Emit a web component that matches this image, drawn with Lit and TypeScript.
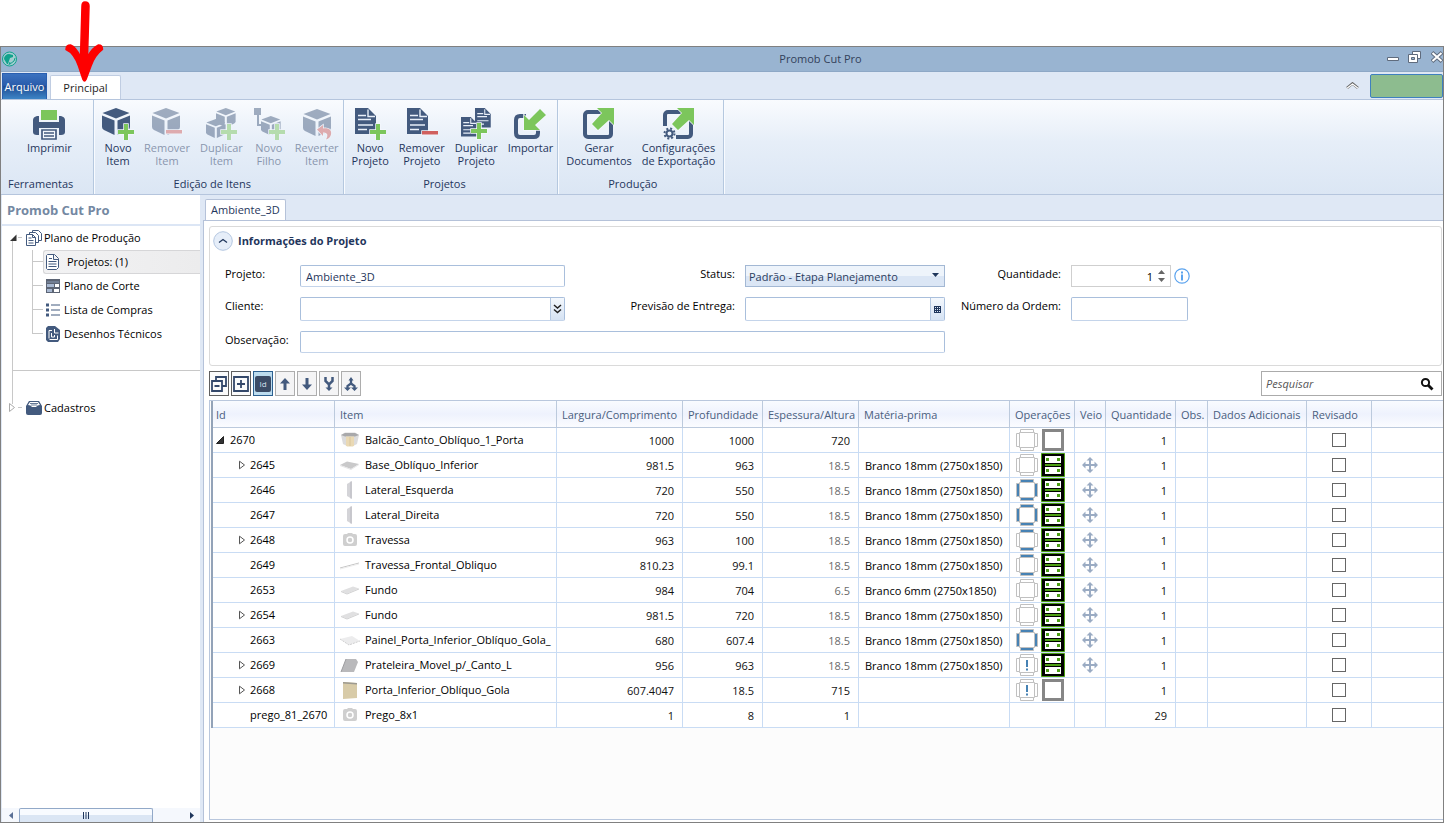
import { LitElement, html, svg, css, nothing } from "lit";
import { customElement } from "lit/decorators.js";
import { classMap } from "lit/directives/class-map.js";

const DARK = "#435a7e";
const GREEN = "#7cc65c";
const RED = "#d0605e";

const cube = (x: number, y: number, s: number) => svg`
  <g transform="translate(${x} ${y}) scale(${s})" fill=${DARK}>
    <path d="M14 0 27.500 5 14 10.500 .500 5z"/>
    <path d="M0 7.500 12.500 12.500V27L2 22Q0 21 0 19z"/>
    <path d="M15.500 12.500 28 7.500V19Q28 21 26 22L15.500 27z"/>
  </g>`;
const plus = (x: number, y: number) => svg`
  <path d="M${x - 2} ${y - 8}h4v6h6v4h-6v6h-4v-6h-6v-4h6z" fill=${GREEN} stroke="#f4f8fd" stroke-width="1.500" paint-order="stroke"/>`;
const minus = (x: number, y: number) => svg`
  <path d="M${x} ${y}h16v3.500h-16z" fill=${RED} stroke="#f4f8fd" stroke-width="1.500" paint-order="stroke"/>`;
const sheet = (x: number, y: number, s: number) => svg`
  <g transform="translate(${x} ${y}) scale(${s})">
    <path d="M0 0h13l8 8v18H0z" fill=${DARK}/>
    <path d="M13 1.500V8.500h7M3 7.500h8M3 11.500h13M3 17h15M3 21.500h9" fill="none" stroke="#e9f0f9" stroke-width="1.400"/>
  </g>`;
const outArrow = svg`<path d="M14 0h17v17l-5-5-11 10-6-6L19 5z" fill=${GREEN} stroke="#f4f8fd" stroke-width="1.500" paint-order="stroke"/>`;

const ribbonIcons: Record<string, unknown> = {
  print: svg`
    <rect x="8" y="2" width="16" height="10" fill=${GREEN}/>
    <path d="M4 8h2v6h20V8h2q4 1 4 4v12q0 3-4 3h-2v-7H6v7H4q-4 0-4-3V12q0-3 4-4z" fill=${DARK}/>
    <path d="M9 22h14v9H9zM11 25h10M11 28h10" fill="#f4f8fd" stroke=${DARK} stroke-width="1.700"/>`,
  cubePlus: svg`${cube(0, 0, 1)}${plus(24, 24)}`,
  cubeMinus: svg`${cube(1, 0, 1)}${minus(15, 22)}`,
  cubesPlus: svg`${cube(11, 0, 0.7)}${cube(1, 11, 0.7)}${plus(24, 24)}`,
  childPlus: svg`<path d="M1 0h7v7H6v9h4v2H4V7H1z" fill=${DARK}/>${cube(8, 8, 0.7)}${plus(24, 24)}`,
  cubeUndo: svg`${cube(2, 1, 1)}<path d="M16 21.500 22 17v3.500c6-1 9 2 8 6q-1 4-5 5 2-4 1-5.500-1-2-4-1.500V28z" fill=${RED} stroke="#f4f8fd" stroke-width="1.500" paint-order="stroke"/>`,
  docPlus: svg`${sheet(1, 0, 1)}${plus(24, 24)}`,
  docMinus: svg`${sheet(1, 0, 1)}${minus(16, 23)}`,
  docsPlus: svg`${sheet(15, 0, 0.75)}${sheet(1, 9, 0.75)}${plus(19, 23)}`,
  import: svg`
    <path d="M12 8H6q-4 0-4 4v13q0 4 4 4h14q4 0 4-4v-3" fill="none" stroke=${DARK} stroke-width="4"/>
    <path d="M26 1l6 6-11 10 5 5H10V7l5 5z" fill=${GREEN} stroke="#f4f8fd" stroke-width="1.500" paint-order="stroke"/>`,
  export: svg`<rect x="2" y="4" width="26" height="25" rx="3" fill="none" stroke=${DARK} stroke-width="4"/>${outArrow}`,
  exportGear: svg`
    <rect x="2" y="4" width="26" height="25" rx="3" fill="none" stroke=${DARK} stroke-width="4"/>
    <rect x="0" y="18" width="13" height="14" fill="#edf3fb"/>${outArrow}
    <circle cx="6.500" cy="25.500" r="3" fill="none" stroke=${DARK} stroke-width="2"/>
    <circle cx="6.500" cy="25.500" r="5" fill="none" stroke=${DARK} stroke-width="2" stroke-dasharray="2 1.930"/>`,
};

type Cmd = { icon: string; l1: string; l2?: string; off?: boolean };
const groups: { name: string; cls?: string; cmds: Cmd[] }[] = [
  { name: "Ferramentas", cls: "tools", cmds: [{ icon: "print", l1: "Imprimir" }] },
  {
    name: "Edição de Itens",
    cmds: [
      { icon: "cubePlus", l1: "Novo", l2: "Item" },
      { icon: "cubeMinus", l1: "Remover", l2: "Item", off: true },
      { icon: "cubesPlus", l1: "Duplicar", l2: "Item", off: true },
      { icon: "childPlus", l1: "Novo", l2: "Filho", off: true },
      { icon: "cubeUndo", l1: "Reverter", l2: "Item", off: true },
    ],
  },
  {
    name: "Projetos",
    cmds: [
      { icon: "docPlus", l1: "Novo", l2: "Projeto" },
      { icon: "docMinus", l1: "Remover", l2: "Projeto" },
      { icon: "docsPlus", l1: "Duplicar", l2: "Projeto" },
      { icon: "import", l1: "Importar" },
    ],
  },
  {
    name: "Produção",
    cls: "roomy",
    cmds: [
      { icon: "export", l1: "Gerar", l2: "Documentos" },
      { icon: "exportGear", l1: "Configurações", l2: "de Exportação" },
    ],
  },
];

const treeIcons: Record<string, unknown> = {
  stack: svg`<g fill="#fff" stroke=${DARK}><path d="M6.500 3V.500h6l3 3v7H12"/><path d="M3.500 5V2.500h6l3 3v7H9"/><path d="M.500 4.500h6l3 3v8H.500zM6.500 4.500v3h3M2.500 8h3M2.500 10.500h5M2.500 13h5" /></g>`,
  doc: svg`<path d="M2.500.500h7l4 4v9l-2 2h-9l-1-1v-13zM8.500.500v5h5M4 4.500h3M3.500 7.500h8M3.500 10h8M3.500 12.500h8" fill="#fff" stroke=${DARK}/>`,
  cut: svg`<path d="M1 1h14v14H1z" fill="#5c6474"/><path d="M2 4h12" stroke="#8799b4" stroke-width="1"/><path d="M2 6h7v3H2zM2 11h5v3H2z" fill="#a9b9d2"/><path d="M10 6h4v3h-4zM9 11h5v3H9z" fill="#fff"/>`,
  list: svg`<path d="M1 1.500h3v3H1zM1 6.500h3v3H1zM1 11.500h3v3H1z" fill=${DARK}/><path d="M6 3h9M6 8h9M6 13h9" stroke=${DARK} stroke-width="1"/>`,
  tech: svg`<path d="M3 0h7l5 4v9l-2 3H3l-2-2V2z" fill=${DARK}/><path d="M4 12.500V4.500h3M9.500 3v4h4M6.500 7v4h3V9M4.500 13.500h8v-4" fill="none" stroke="#fff"/>`,
  box: svg`<path d="M0 6 3 1h10l3 5v7q0 2-2 2H2q-2 0-2-2z" fill=${DARK}/><path d="M2 5l2-3h8l2 3q-3 0-4 2H6Q5 5 2 5z" fill="#fff"/><path d="M4 3.500h8M5 5h6" stroke=${DARK} stroke-width=".8"/>`,
};

const children = [
  { icon: "doc", label: "Projetos: (1)", sel: true },
  { icon: "cut", label: "Plano de Corte" },
  { icon: "list", label: "Lista de Compras" },
  { icon: "tech", label: "Desenhos Técnicos" },
];

const thumbs: Record<string, unknown> = {
  cabinet: svg`<path d="M1 4 5 1.500h10L19 4l-2 9-4 2H7l-4-2z" fill="#dcdcdd"/><path d="M1 4 5 2h10l4 2-4 1.500H5z" fill="#a9a9ab"/><path d="M6 5.500h8v9l-1 1H7l-1-1z" fill="#ead9b4"/><path d="M10 6v9" stroke="#cdb98d" stroke-width=".6"/>`,
  base: svg`<path d="M0 9 7 5.500 19 8 11 13z" fill="#c9c9ca"/><path d="M0 9l11 4 8-5v1l-8 5-11-4z" fill="#e5e5e6"/>`,
  side: svg`<path d="M7 3l5-3v18l-5-3z" fill="#d4d4d8"/><path d="M11 .500V17.500" stroke="#bbbbc2"/>`,
  camera: svg`<path d="M5 3h2l1-1h4l1 1h2q2 0 2 2v8q0 2-2 2H5q-2 0-2-2V5q0-2 2-2z" fill="#cfcfcf"/><circle cx="10" cy="9" r="3" fill="none" stroke="#fff" stroke-width="1.500"/>`,
  rail: svg`<path d="M0 12 19 7" stroke="#c4c4c4"/><path d="M0 13 19 8" stroke="#ececec"/>`,
  panel: svg`<path d="M1 10 13 5.500 19 7.500 7 12.500z" fill="#e0e0e1"/><path d="M1 10l6 2.500 12-5v1L7 13.500 1 11z" fill="#cfcfd0"/>`,
  door: svg`<path d="M0 8 12 5l8 5-11 4z" fill="#ececed"/><path d="M0 8l9 6 11-4" fill="none" stroke="#cfcfd0" stroke-dasharray="2 1"/>`,
  shelf: svg`<path d="M6 3h10l2 3-4 10H1z" fill="#b9b9bb"/><path d="M1 16 6 3" stroke="#9d9da0"/>`,
  wood: svg`<path d="M3 1l14 1v15l-14 1z" fill="#d8cba8"/><path d="M3 1l14 1v1.500L3 2.500z" fill="#9d9a90"/>`,
};

type Row = {
  id: string; exp?: "open" | "shut"; child: boolean; img: string; item: string;
  w: string; d: string; h: string; strong?: boolean; mat?: string; op?: string; n: string;
};
const M18 = "Branco 18mm (2750x1850)";
const rows: Row[] = [
  { id: "2670", exp: "open", child: false, img: "cabinet", item: "Balcão_Canto_Oblíquo_1_Porta", w: "1000", d: "1000", h: "720", strong: true, op: "none", n: "1" },
  { id: "2645", exp: "shut", child: true, img: "base", item: "Base_Oblíquo_Inferior", w: "981.5", d: "963", h: "18.5", mat: M18, op: "none", n: "1" },
  { id: "2646", child: true, img: "side", item: "Lateral_Esquerda", w: "720", d: "550", h: "18.5", mat: M18, op: "all", n: "1" },
  { id: "2647", child: true, img: "side", item: "Lateral_Direita", w: "720", d: "550", h: "18.5", mat: M18, op: "all", n: "1" },
  { id: "2648", exp: "shut", child: true, img: "camera", item: "Travessa", w: "963", d: "100", h: "18.5", mat: M18, op: "tb", n: "1" },
  { id: "2649", child: true, img: "rail", item: "Travessa_Frontal_Obliquo", w: "810.23", d: "99.1", h: "18.5", mat: M18, op: "tb", n: "1" },
  { id: "2653", child: true, img: "panel", item: "Fundo", w: "984", d: "704", h: "6.5", mat: "Branco 6mm (2750x1850)", op: "none", n: "1" },
  { id: "2654", exp: "shut", child: true, img: "panel", item: "Fundo", w: "981.5", d: "720", h: "18.5", mat: M18, op: "none", n: "1" },
  { id: "2663", child: true, img: "door", item: "Painel_Porta_Inferior_Oblíquo_Gola_", w: "680", d: "607.4", h: "18.5", mat: M18, op: "all", n: "1" },
  { id: "2669", exp: "shut", child: true, img: "shelf", item: "Prateleira_Movel_p/_Canto_L", w: "956", d: "963", h: "18.5", mat: M18, op: "warn", n: "1" },
  { id: "2668", exp: "shut", child: true, img: "wood", item: "Porta_Inferior_Oblíquo_Gola", w: "607.4047", d: "18.5", h: "715", strong: true, op: "warn", n: "1" },
  { id: "prego_81_2670", child: true, img: "camera", item: "Prego_8x1", w: "1", d: "8", h: "1", strong: true, n: "29" },
];
const heads = ["Id", "Item", "Largura/Comprimento", "Profundidade", "Espessura/Altura", "Matéria-prima", "Operações", "Veio", "Quantidade", "Obs.", "Dados Adicionais", "Revisado", ""];

const edges = (op: string) => {
  const tb = op === "all" || op === "tb" ? "#4682b4" : "#fff";
  const lr = op === "all" ? "#4682b4" : "#fff";
  return html`<svg width="22" height="22" viewBox="0 0 22 22">
    <g stroke="#c0c0c0">
      <path d="M3.500 3.500h15v15h-15z" fill="#fff"/>
      <path d="M4.500.500h13v3h-13zM4.500 18.500h13v3h-13z" fill=${tb}/>
      <path d="M.500 4.500h3v13h-3zM18.500 4.500h3v13h-3z" fill=${lr}/>
    </g>
    ${op === "warn" ? svg`<path d="M10 6h2v7h-2zM10 14.500h2v2h-2z" fill="#4682b4"/>` : nothing}
  </svg>`;
};
const machining = html`<svg width="24" height="24" viewBox="0 0 24 24">
  <path d="M.500.500h23v23H.500z" fill="#000" stroke="#4c9f14"/>
  <path d="M4 3h16v7H4zM4 14h16v7H4z" fill="#fff"/>
  <path d="M5 5h3v3H5zM16 5h3v3h-3zM4 11h16v2H4zM5 16h3v3H5zM16 16h3v3h-3z" fill="#4c9f14"/>
</svg>`;
const blank = html`<svg width="24" height="24" viewBox="0 0 24 24"><path d="M2.500 2.500h19v19h-19z" fill="#fff" stroke="#868686" stroke-width="3"/></svg>`;
const grain = html`<svg width="16" height="16" viewBox="0 0 16 16"><path d="M8 0l3.500 3.500H9V7h3.500V4.500L16 8l-3.500 3.500V9H9v3.500h2.500L8 16l-3.500-3.500H7V9H3.500v2.500L0 8l3.500-3.500V7H7V3.500H4.500z" fill="#9aabc3"/></svg>`;
const openMark = html`<svg width="8" height="8" viewBox="0 0 8 8"><path d="M7.500.500v7h-7z" fill="#333" stroke="#222"/></svg>`;
const shutMark = html`<svg width="8" height="10" viewBox="0 0 8 10"><path d="M1.500 1.200v7.600L6.500 5z" fill="#fff" stroke="#555"/></svg>`;

@customElement("app-root")
export class AppRoot extends LitElement {
  static styles = css`
    :host { display: flex; flex-direction: column; height: 100vh; box-sizing: border-box; padding: 46px 1px 6px 0; background: #fff; position: relative;
      font-family: "Open Sans", "Noto Sans", sans-serif; font-size: 11px; line-height: 16px; color: #1a1a1a; }
    * { box-sizing: border-box; }
    svg { display: block; flex: none; }
    button, input, select { font: inherit; color: inherit; margin: 0; padding: 0; border-radius: 0; outline: none; }
    button { background: none; border: 0; }
    .pointer { position: absolute; left: 64px; top: 0; pointer-events: none; z-index: 2; }
    .window { flex: 1; min-height: 0; border: 1px solid #808080; display: flex; flex-direction: column; background: #dfe8f5; }
    .title { display: flex; align-items: center; height: 25px; background: #99b4d1; border-bottom: 1px solid #8ea8c6; padding-left: 1px; flex: none; }
    .title h1 { flex: 1; margin: 0; padding-left: 236px; font: inherit; color: #33415a; text-align: center; }
    .winbtns { display: flex; gap: 9px; align-items: center; height: 20px; align-self: flex-start; }
    .tabs { display: flex; align-items: flex-end; height: 27px; flex: none; padding-left: 1px; }
    .file { width: 45px; height: 26px; color: #fff; border: 1px solid #2a5fb0; border-bottom: 0; background: linear-gradient(#3b72c0, #2a5cab 45%, #1f4c94 50%, #3d85c6); white-space: nowrap; display: flex; align-items: center; justify-content: center; }
    .main { width: 71px; height: 24px; margin-left: 3px; background: #fff; border: 1px solid #c0cde2; border-bottom: 0; border-radius: 2px 2px 0 0; color: #1e1e1e; }
    .right { margin-left: auto; display: flex; align-items: center; gap: 11px; height: 27px; }
    .badge { width: 73px; height: 24px; background: #8dbc8f; border: 1px solid #3f80bf; border-radius: 2px; }
    .ribbon { display: flex; flex: none; height: 96px; border-top: 1px solid #b5c5dd; border-bottom: 1px solid #b5c5dd; background: linear-gradient(#f9fbfe, #e6eef8 45%, #dbe6f4); padding-left: 1px; }
    .group { display: flex; flex-direction: column; justify-content: space-between; border-right: 1px solid #b5c8df; box-shadow: 1px 0 #f8fbff; padding: 6px 0 2px 4px; color: #1f365c; }
    .group.tools { width: 92px; }
    .group.roomy { padding-right: 4px; }
    .cmds { display: flex; gap: 2px; }
    .cmd { display: flex; flex-direction: column; align-items: center; gap: 1px; padding: 2px 4px 0; line-height: 13px; white-space: nowrap; color: #1f365c; }
    .tools .cmd { margin-left: 17px; }
    .cmd:disabled { opacity: .48; }
    .gname { text-align: center; padding-right: 16px; }
    .tools .gname { text-align: left; padding-left: 2px; }
    .body { flex: 1; min-height: 0; display: flex; }
    .side { flex: none; margin-left: 1px; width: 198px; background: #fff; display: flex; flex-direction: column; }
    .side h2 { margin: 0; height: 31px; padding: 5px 5px 0; font-size: 13px; line-height: 20px; color: #7488a2; border-bottom: 2px solid #dce6f5; flex: none; }
    .tree { list-style: none; margin: 0; padding: 0; flex: 1; }
    .tree ul { list-style: none; margin: 0; padding: 0; }
    .node { display: flex; height: 24px; align-items: center; color: #000; }
    .node a { color: inherit; text-decoration: none; display: flex; align-items: center; gap: 2px; flex: 1; height: 24px; padding-left: 2px; }
    .node .leaf { border: 1px solid transparent; padding-left: 1px; gap: 3px; }
    .node .sel { background: linear-gradient(90deg, #f2f2f3, #ececed); border-color: #d6d6d8; border-right: 0; border-radius: 3px 0 0 3px; gap: 6px; }
    .rule { height: 25px; margin-left: 10px; border-left: 1px solid #c8c8c8; border-bottom: 1px solid #c8c8c8; }
    .rule.open { border-bottom: 0; }
    .hscroll { display: flex; height: 14px; align-items: stretch; background: #f5f8fd; flex: none; }
    .hscroll button { width: 17px; display: grid; place-items: center; }
    .track { flex: 1; display: flex; }
    .thumb { width: 82%; border: 1px solid #92a9c8; border-bottom: 0; border-radius: 2px 2px 0 0; background: linear-gradient(#f8fbff 50%, #dbe6f4 50%); display: grid; place-items: center; }
    .content { flex: 1; min-width: 0; display: flex; flex-direction: column; padding-left: 3px; }
    .docs { height: 25px; display: flex; align-items: flex-end; flex: none; }
    .doc { margin-left: 2px; height: 21px; padding: 0 5px; background: #fff; border: 1px solid #b5c2d9; border-bottom: 0; border-radius: 2px 2px 0 0; color: #1f365c; }
    .page { flex: 1; min-height: 0; background: #fff; border-left: 1px solid #b5c2d9; border-top: 1px solid #b5c2d9; padding: 5px 0 2px 5px; display: flex; flex-direction: column; }
    .info { margin: 0 1px 0 0; border: 1px solid #dadada; border-radius: 3px; padding: 3px 0 12px 3px; flex: none; }
    .info h3 { margin: 0; display: flex; align-items: center; gap: 5px; height: 22px; font-size: 11px; color: #1f365c; }
    .form { display: grid; grid-template-columns: 75px 265px 180px 200px 126px 120px; row-gap: 10px; padding: 13px 0 0 12px; align-items: start; }
    .form label { line-height: 18px; color: #000; }
    .form .r { text-align: right; padding-right: 10px; }
    .box { display: flex; height: 24px; border: 1px solid #a9bfdc; border-bottom-color: #c4d4ea; border-radius: 2px; background: #fff; color: #1f365c; }
    .box input { flex: 1; min-width: 0; border: 0; padding: 2px 5px 0; background: none; }
    .box.low { height: 22px; }
    .box button { border-left: 1px solid #b4c7e0; background: linear-gradient(#f4f8fd, #d5e2f3); display: grid; place-items: center; width: 14px; }
    .wide { grid-column: 2 / 5; }
    .pick { display: grid; height: 22px; color: #2c405f; }
    .pick > * { grid-area: 1 / 1; }
    .pick select { appearance: none; border: 1px solid #a3b8d4; background: linear-gradient(#eef4fb 50%, #dbe6f5 50%); padding: 1px 3px 0; }
    .pick svg { justify-self: end; align-self: center; margin: 0 6px 2px 0; pointer-events: none; }
    .qty { display: flex; align-items: center; gap: 3px; }
    .spin { width: 100px; border-color: #cfcfcf; border-radius: 0; }
    .spin input { text-align: right; padding-right: 4px; appearance: textfield; color: #000; }
    .spin input::-webkit-inner-spin-button { appearance: none; margin: 0; }
    .steps { width: 13px; display: flex; flex-direction: column; justify-content: center; gap: 4px; }
    .box .steps button { border: 0; background: none; width: 8px; height: 4px; }
    .order { width: 117px; }
    .bar { display: flex; gap: 2px; margin: 5px 1px 4px 0; flex: none; }
    .tool { width: 20px; height: 25px; border: 1px solid #adadad; background: #f4f4f5; display: grid; place-items: center; }
    .tool.on { border-color: #5f5f5f; background: #fbfbfb; }
    .tool.active { border-color: #2c6090; background: #bcdcef; }
    .chip { width: 16px; height: 16px; border-radius: 2px; background: #3a4b66; color: #d5e0ee; font-size: 8px; line-height: 16px; text-align: center; }
    .search { margin-left: auto; width: 181px; height: 25px; border: 1px solid #ababab; display: flex; align-items: center; padding-right: 7px; background: #fff; }
    .search input { flex: 1; min-width: 0; border: 0; padding: 0 4px; font-style: italic; background: none; }
    .search input::placeholder { color: #555; opacity: 1; }
    .grid { flex: 1; min-height: 0; border: 1px solid #b9c7dd; border-right: 0; background: #fcfcfc; padding-left: 1px; overflow: hidden; }
    table { width: 100%; table-layout: fixed; border-collapse: separate; border-spacing: 0; border-left: 2px solid #93a3b8; background: #fff; }
    th, td { padding: 0 0 0 5px; white-space: nowrap; overflow: hidden; text-align: left; font-weight: 400; border-right: 1px solid #c9dcf4; border-bottom: 1px solid #c9dcf4; }
    th:first-child, td:first-child { padding-left: 3px; }
    th:last-child, td:last-child { border-right: 0; }
    th { height: 27px; padding-top: 2px; color: #4a5e7e; border-color: #bccadd; background: linear-gradient(#f9fbff, #eef2fd 50%, #fbfcff); }
    td { height: 25px; color: #000; }
    td.num { text-align: right; padding: 2px 8px 0 0; color: #111; }
    td.mat { padding: 2px 0 0 6px; }
    td.dim { color: #6a6a6a; }
    .cell { display: flex; align-items: center; gap: 5px; height: 24px; }
    .mark { width: 8px; }
    .lead { gap: 6px; }
    .kid { padding-left: 22px; gap: 4px; }
    .ops { display: flex; align-items: center; gap: 3px; height: 24px; padding-left: 1px; }
    td.mid { text-align: center; padding-left: 0; }
    .mid svg { margin: 0 auto; }
    .check { appearance: none; width: 14px; height: 14px; border: 1px solid #666; background: #fff; display: block; margin: 0 auto; }
    .w0 { width: 122px; } .w1 { width: 222px; } .w2 { width: 126px; } .w3 { width: 80px; } .w4 { width: 96px; } .w5 { width: 151px; }
    .w6 { width: 65px; } .w7 { width: 31px; } .w8 { width: 70px; } .w9 { width: 32px; } .w10 { width: 99px; } .w11 { width: 65px; }
  `;

  private tool(label: string, cls: string, glyph: unknown) {
    return html`<button class="tool ${cls}" aria-label=${label}>${glyph}</button>`;
  }

  private toolbar() {
    const i = (body: unknown) => html`<svg width="16" height="16" viewBox="0 0 16 16">${body}</svg>`;
    return html`<div class="bar">
      ${this.tool("Recolher", "on", i(svg`<path d="M5 5V1h10v9h-4M1 5h10v10H1zM3.500 10h5" fill="none" stroke="#34486a" stroke-width="1.800"/>`))}
      ${this.tool("Expandir", "on", i(svg`<path d="M1 1h14v14H1zM4 8h8M8 4v8" fill="none" stroke="#34486a" stroke-width="1.800"/>`))}
      ${this.tool("Identificador", "active", html`<span class="chip">Id</span>`)}
      ${this.tool("Subir", "", i(svg`<path d="M8 2l5 5.500H9.500V14h-3V7.500H3z" fill=${DARK}/>`))}
      ${this.tool("Descer", "", i(svg`<path d="M8 14l5-5.500H9.500V2h-3v6.500H3z" fill=${DARK}/>`))}
      ${this.tool("Unir", "", i(svg`<path d="M4.500 1v4L8 8.500 11.500 5V1M8 8v5" fill="none" stroke=${DARK} stroke-width="2.500"/><path d="M4.500 11.500h7L8 15z" fill=${DARK}/>`))}
      ${this.tool("Separar", "", i(svg`<path d="M8 3v4.500L4.500 10v3M8 7.500l3.500 2.500v3" fill="none" stroke=${DARK} stroke-width="2.300"/><path d="M1 11.500h7L4.500 15zM8 11.500h7L11.500 15zM8 1l2.500 3.500h-5z" fill=${DARK}/>`))}
      <div class="search">
        <input type="text" placeholder="Pesquisar" aria-label="Pesquisar" />
        <svg width="14" height="14" viewBox="0 0 14 14"><circle cx="5.500" cy="5.500" r="3.600" fill="none" stroke="#111" stroke-width="2"/><path d="M8 8l4.500 4.500" stroke="#111" stroke-width="2.800"/></svg>
      </div>
    </div>`;
  }

  private form() {
    return html`<section class="info">
      <h3>
        <button aria-label="Recolher seção"><svg width="20" height="20" viewBox="0 0 20 20"><circle cx="10" cy="10" r="9.300" fill="#e6eef9" stroke="#b3c6e0"/><path d="M6 11.500l4-3 4 3" fill="none" stroke="#1f365c" stroke-width="1.300"/></svg></button>
        Informações do Projeto
      </h3>
      <div class="form">
        <label for="proj">Projeto:</label>
        <div class="box low"><input id="proj" type="text" .value=${"Ambiente_3D"} /></div>
        <label class="r" for="status">Status:</label>
        <div class="pick"><select id="status"><option>Padrão - Etapa Planejamento</option></select><svg width="7" height="4" viewBox="0 0 7 4"><path d="M0 0h7L3.500 4z" fill="#1f365c"/></svg></div>
        <label class="r" for="qty">Quantidade:</label>
        <div class="qty">
          <div class="box low spin"><input id="qty" type="number" .value=${"1"} /><span class="steps">
            <button aria-label="Aumentar"><svg width="7" height="4" viewBox="0 0 7 4"><path d="M0 4h7L3.500 0z" fill="#666"/></svg></button>
            <button aria-label="Diminuir"><svg width="7" height="4" viewBox="0 0 7 4"><path d="M0 0h7L3.500 4z" fill="#666"/></svg></button></span></div>
          <svg width="16" height="16" viewBox="0 0 16 16"><circle cx="8" cy="8" r="7.200" fill="#fff" stroke="#5ba3ee" stroke-width="1.200"/><path d="M7 3.500h2v2H7zM7 6.500h2v6H7z" fill="#5ba3ee"/></svg>
        </div>
        <label for="client">Cliente:</label>
        <div class="box"><input id="client" type="text" /><button aria-label="Escolher cliente"><svg width="9" height="10" viewBox="0 0 9 10"><path d="M1 1l3.500 3L8 1M1 5.500l3.500 3 3.500-3" fill="none" stroke="#222" stroke-width="1.500"/></svg></button></div>
        <label class="r" for="due">Previsão de Entrega:</label>
        <div class="box"><input id="due" type="text" /><button aria-label="Abrir calendário"><svg width="7" height="7" viewBox="0 0 7 7"><path d="M0 0h7v7H0z" fill="#1f365c"/><path d="M1 1h1v1H1zM3 1h1v1H3zM5 1h1v1H5zM1 3h1v1H1zM3 3h1v1H3zM5 3h1v1H5zM1 5h1v1H1zM3 5h1v1H3zM5 5h1v1H5z" fill="#dbe6f5"/></svg></button></div>
        <label class="r" for="order">Número da Ordem:</label>
        <div class="box order"><input id="order" type="text" /></div>
        <label for="obs">Observação:</label>
        <div class="box low wide"><input id="obs" type="text" /></div>
      </div>
    </section>`;
  }

  private row(r: Row) {
    return html`<tr>
      <td><div class=${classMap({ cell: true, lead: !r.child, kid: r.child })}>
        <span class="mark">${r.exp === "open" ? openMark : r.exp === "shut" ? shutMark : nothing}</span>${r.id}</div></td>
      <td><div class="cell"><svg width="20" height="18" viewBox="0 0 20 18">${thumbs[r.img]}</svg>${r.item}</div></td>
      <td class="num">${r.w}</td>
      <td class="num">${r.d}</td>
      <td class=${classMap({ num: true, dim: !r.strong })}>${r.h}</td>
      <td class="mat">${r.mat ?? nothing}</td>
      <td><div class="ops">${r.op ? html`${edges(r.op)}${r.mat ? machining : blank}` : nothing}</div></td>
      <td class="mid">${r.mat ? grain : nothing}</td>
      <td class="num">${r.n}</td>
      <td></td><td></td>
      <td class="mid"><input class="check" type="checkbox" aria-label="Revisado ${r.id}" /></td>
      <td></td>
    </tr>`;
  }

  private sidebar() {
    const grey = "#c8c8c8";
    return html`<aside class="side">
      <h2>Promob Cut Pro</h2>
      <ul class="tree">
        <li>
          <div class="node">
            <svg width="22" height="24" viewBox="0 0 22 24"><path d="M10.500 14V24M16 11.500h4" stroke=${grey} fill="none"/><path d="M14.500 8.500v6.500H8z" fill="#333"/></svg>
            <a href="#plano"><svg width="16" height="16" viewBox="0 0 16 16">${treeIcons.stack}</svg>Plano de Produção</a>
          </div>
          <ul>
            ${children.map((c, i) => html`<li class="node">
              <svg width="41" height="24" viewBox="0 0 41 24"><path d="M10.500 0V24M30.500 0V${i === 3 ? 12 : 24}M31 11.500h10" stroke=${grey} fill="none"/></svg>
              <a class=${classMap({ leaf: true, sel: !!c.sel })} href="#item${i}"><svg width="16" height="16" viewBox="0 0 16 16">${treeIcons[c.icon]}</svg>${c.label}</a>
            </li>`)}
          </ul>
        </li>
        <li class="rule"></li>
        <li class="rule open"></li>
        <li class="node">
          <svg width="22" height="24" viewBox="0 0 22 24"><path d="M10.500 0V8M16 11.500h4" stroke=${grey} fill="none"/><path d="M7.500 7.500v8l5-4z" fill="#fff" stroke="#aaa"/></svg>
          <a href="#cadastros"><svg width="16" height="16" viewBox="0 0 16 16">${treeIcons.box}</svg>Cadastros</a>
        </li>
      </ul>
      <div class="hscroll">
        <button aria-label="Rolar para a esquerda"><svg width="4" height="7" viewBox="0 0 4 7"><path d="M4 0v7L0 3.500z" fill="#5a7096"/></svg></button>
        <div class="track"><div class="thumb"><svg width="6" height="7" viewBox="0 0 6 7"><path d="M.500 0v7M3 0v7M5.500 0v7" stroke="#1f365c"/></svg></div></div>
        <button aria-label="Rolar para a direita"><svg width="4" height="7" viewBox="0 0 4 7"><path d="M0 0v7l4-3.500z" fill="#1f365c"/></svg></button>
      </div>
    </aside>`;
  }

  render() {
    return html`
      <div class="window">
        <header class="title">
          <svg width="16" height="16" viewBox="0 0 16 16"><circle cx="7.500" cy="8" r="7" fill="#a3cdd0" stroke="#11a28c"/><path d="M7 3a5 5 0 0 0-5 5l3 5h1l1-3 1-3 3-1V4z" fill="#11a28c"/><path d="M8 13l4-3 1-3M7 14l1-3" stroke="#11a28c" fill="none"/></svg>
          <h1>Promob Cut Pro</h1>
          <div class="winbtns">
            <button aria-label="Minimizar"><svg width="12" height="12" viewBox="0 0 12 12"><path d="M.500 6.500h11v3H.500z" fill="#fff" stroke="#5f6b7d"/></svg></button>
            <button aria-label="Restaurar"><svg width="14" height="14" viewBox="0 0 14 14"><path d="M4.500 1.500h8v7h-8z" fill="#fff" stroke="#5f6b7d"/><path d="M.500 4.500h9v8h-9z" fill="#fff" stroke="#5f6b7d"/><path d="M3.500 7.500h3v2h-3z" fill="#99b4d1" stroke="#5f6b7d"/></svg></button>
            <button aria-label="Fechar"><svg width="12" height="12" viewBox="0 0 12 12"><path d="M1 1.500l10 9M11 1.500l-10 9" stroke="#5f6b7d" stroke-width="4"/><path d="M1.500 2l9 8M10.500 2l-9 8" stroke="#fff" stroke-width="2"/></svg></button>
          </div>
        </header>
        <div class="tabs">
          <button class="file">Arquivo</button>
          <button class="main">Principal</button>
          <div class="right">
            <button aria-label="Recolher faixa"><svg width="13" height="8" viewBox="0 0 13 8"><path d="M1 6 6.500 1.500 12 6" fill="none" stroke="#666" stroke-width="2.600"/><path d="M1 6.300 6.500 2 12 6.300" fill="none" stroke="#fff" stroke-width="1.200"/></svg></button>
            <div class="badge"></div>
          </div>
        </div>
        <div class="ribbon">
          ${groups.map((g) => html`<div class="group ${g.cls ?? ""}">
            <div class="cmds">${g.cmds.map((c) => html`<button class="cmd" ?disabled=${!!c.off}>
              <svg width="32" height="32" viewBox="0 0 32 32">${ribbonIcons[c.icon]}</svg>
              <span>${c.l1}${c.l2 ? html`<br />${c.l2}` : nothing}</span></button>`)}</div>
            <div class="gname">${g.name}</div>
          </div>`)}
        </div>
        <div class="body">
          ${this.sidebar()}
          <main class="content">
            <div class="docs"><button class="doc">Ambiente_3D</button></div>
            <div class="page">
              ${this.form()}
              ${this.toolbar()}
              <div class="grid">
                <table>
                  <thead><tr>${heads.map((h, i) => html`<th class="w${i}">${h}</th>`)}</tr></thead>
                  <tbody>${rows.map((r) => this.row(r))}</tbody>
                </table>
              </div>
            </div>
          </main>
        </div>
      </div>
      <svg class="pointer" width="42" height="84" viewBox="0 0 42 84">
        <path d="M21 2q-3 0-3 4L16.500 57Q12 47 6.500 45Q2 45 2 49.500Q10 53 14.500 66L19 79.500q1.500 3 3 0L27 66Q31 55 38.500 49.500Q38.500 45 34.500 45Q28 48 23.500 57L25 6q0-4-4-4z" fill="#fe0000" stroke="#fe0000" stroke-width="1.500" stroke-linejoin="round"/>
      </svg>`;
  }
}
